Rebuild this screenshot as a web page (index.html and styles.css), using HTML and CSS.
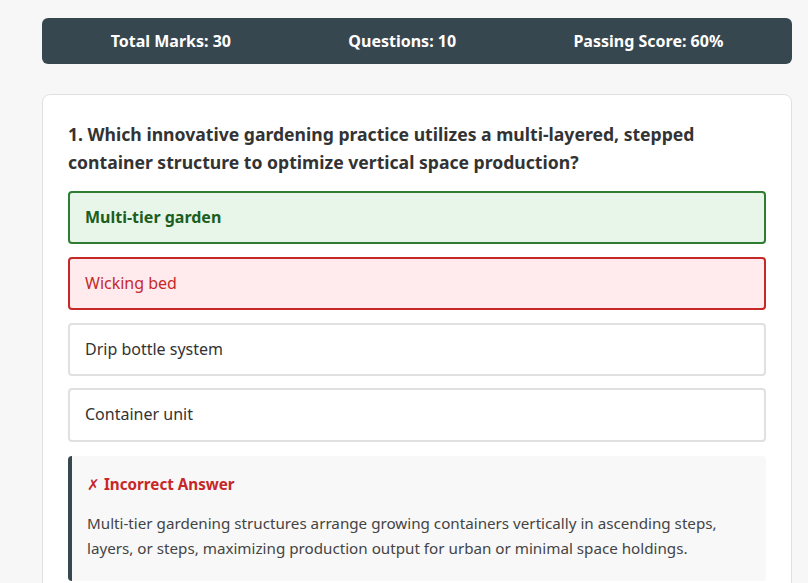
FILE: index.html
```html
<!DOCTYPE html>
<html lang="en">
<head>
    <meta charset="UTF-8">
    <meta name="viewport" content="width=device-width, initial-scale=1.0">
    <title>Gardening Quiz</title>
    <link rel="stylesheet" href="styles.css">
</head>
<body>
    <div class="quiz">
        <div class="quiz-info">
            <span>Total Marks: 30</span>
            <span>Questions: 10</span>
            <span>Passing Score: 60%</span>
        </div>

        <div class="question-card">
            <h2 class="question">1. Which innovative gardening practice utilizes a multi-layered, stepped container structure to optimize vertical space production?</h2>

            <div class="options">
                <div class="option correct">Multi-tier garden</div>
                <div class="option incorrect">Wicking bed</div>
                <div class="option">Drip bottle system</div>
                <div class="option">Container unit</div>
            </div>

            <div class="feedback">
                <div class="feedback-title"><span class="mark">✗</span> Incorrect Answer</div>
                <p>Multi-tier gardening structures arrange growing containers vertically in ascending steps, layers, or steps, maximizing production output for urban or minimal space holdings.</p>
            </div>
        </div>
    </div>
</body>
</html>
```

FILE: styles.css
```css
body {
    font-family: "Noto Sans", "Open Sans", sans-serif;
    margin: 0;
    background: #f7f7f7;
    color: #333;
}
.quiz {
    width: 750px;
    margin: 18px 0 0 42px;
}
.quiz-info {
    display: flex;
    justify-content: space-around;
    align-items: center;
    height: 46px;
    padding: 0 10px;
    background: #37474f;
    color: white;
    font-weight: bold;
    font-size: 16px;
    border-radius: 6px;
}
.question-card {
    margin-top: 30px;
    background: white;
    border: 1px solid #e0e0e0;
    border-radius: 8px;
    padding: 25px;
}
.question {
    margin: 0 0 15px;
    font-size: 17.6px;
    line-height: 28px;
    color: #333;
}
.options {
    display: flex;
    flex-direction: column;
    gap: 12.6px;
}
.option {
    padding: 15px;
    font-size: 16px;
    line-height: 19.2px;
    border: 2px solid #e0e0e0;
    border-radius: 4px;
    background: white;
    color: #333;
}
.option.correct {
    background: #e8f5e9;
    border-color: #2e7d32;
    color: #1b5e20;
    font-weight: bold;
}
.option.incorrect {
    background: #ffebee;
    border-color: #c62828;
    color: #c62828;
}
.feedback {
    margin-top: 14px;
    background: #f8f8f8;
    border-left: 4px solid #37474f;
    border-radius: 4px;
    padding: 17px 15px 20px;
}
.feedback-title {
    color: #c62828;
    font-weight: bold;
    font-size: 15.2px;
    line-height: 22px;
}
.feedback-title .mark {
    font-weight: normal;
}
.feedback p {
    margin: 16px 0 0;
    font-size: 15.2px;
    line-height: 25px;
    color: #444;
}
```
